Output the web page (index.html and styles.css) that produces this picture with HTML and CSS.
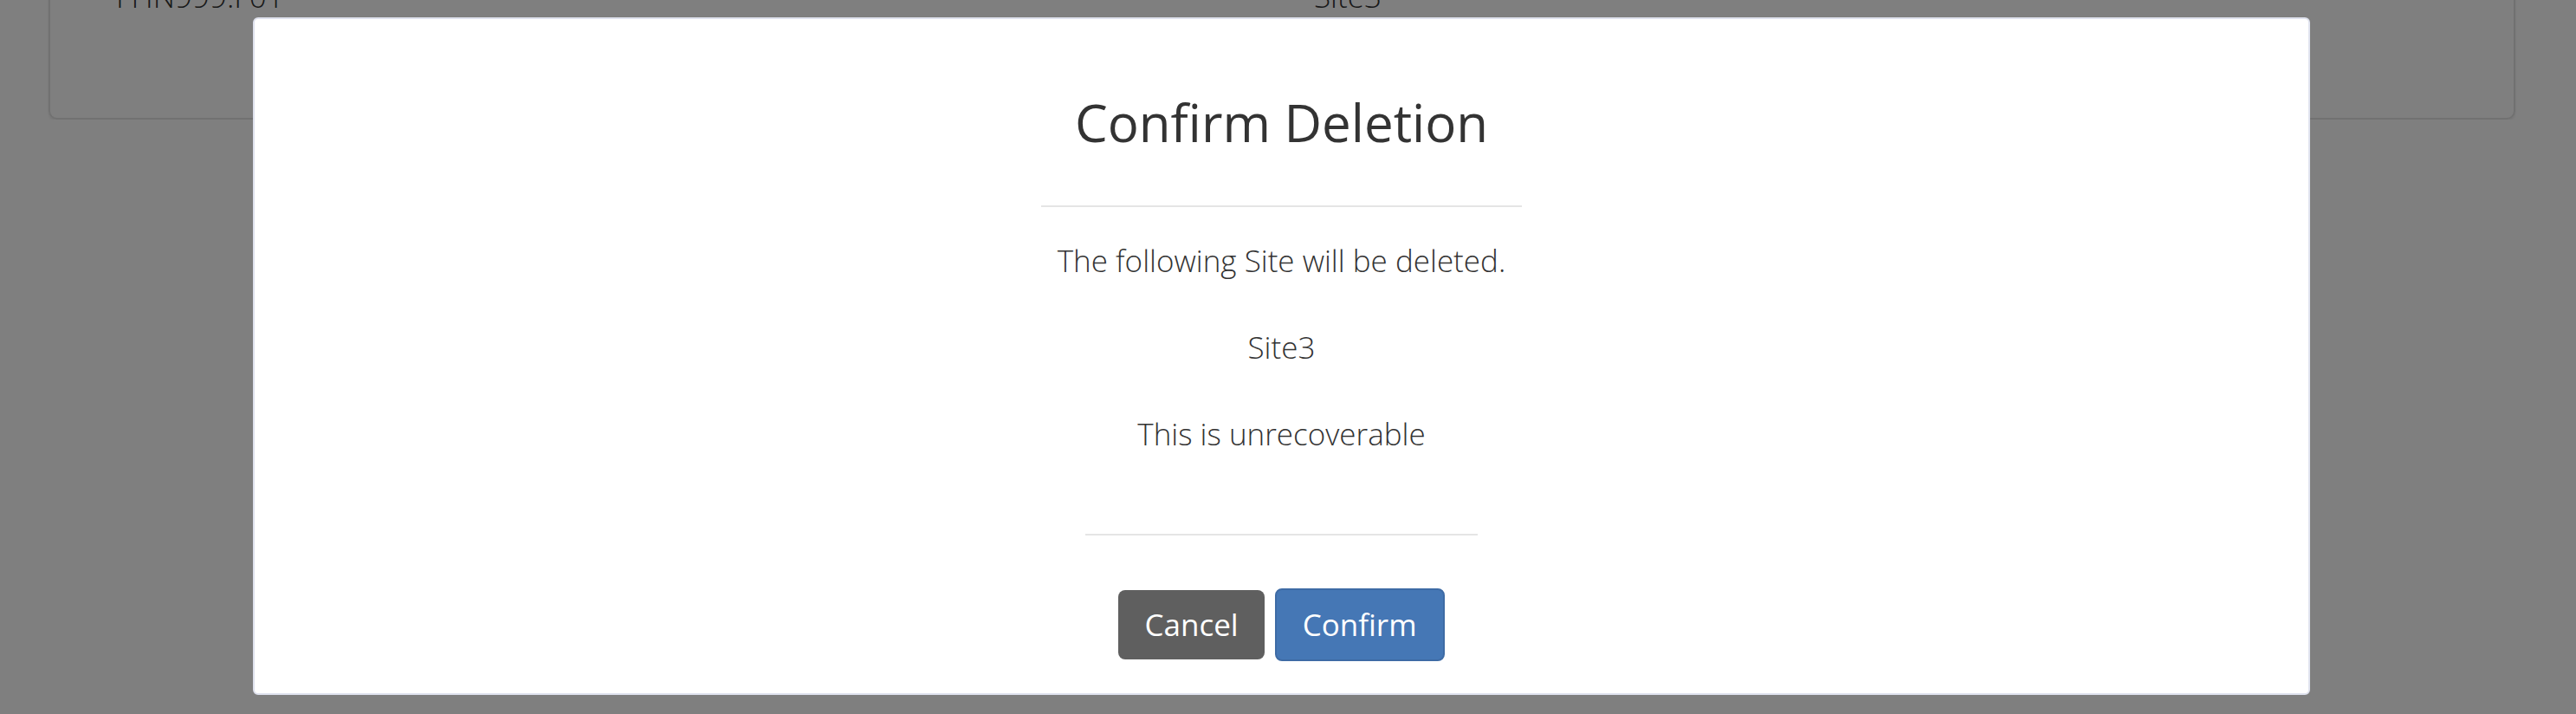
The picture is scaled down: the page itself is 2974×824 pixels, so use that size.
FILE: index.html
```html
<!DOCTYPE html>
<html lang="en">
<head>
<meta charset="utf-8">
<title>Confirm Deletion</title>
<link rel="stylesheet" href="styles.css">
</head>
<body>
<div class="page">
  <div class="card">
    <div class="row">
      <div class="cell cell-name">FHN999.F01</div>
      <div class="cell">Site3</div>
    </div>
  </div>
</div>

<div class="overlay">
  <div class="modal">
    <div class="modal-header">
      <h4 class="modal-title">Confirm Deletion</h4>
    </div>
    <div class="modal-body">
      <p>The following Site will be deleted.</p>
      <p>Site3</p>
      <p>This is unrecoverable</p>
    </div>
    <div class="modal-footer">
      <button class="btn btn-cancel" type="button">Cancel</button>
      <button class="btn btn-confirm" type="button">Confirm</button>
    </div>
  </div>
</div>
</body>
</html>
```

FILE: styles.css
```css
html, body {
  margin: 0;
  padding: 0;
  background: #ffffff;
  font-family: "Open Sans", "Liberation Sans", sans-serif;
  color: #333333;
}

.page {
  margin-top: -29px;
  padding: 0 70px 0 56px;
}

.card {
  border: 2px solid #e2e2e2;
  border-top: none;
  border-radius: 0 0 10px 10px;
  box-shadow: 0 2px 3px rgba(0, 0, 0, 0.08);
  padding: 0 0 115px 76px;
}

.row {
  display: grid;
  grid-template-columns: 1383px 1fr;
  font-size: 35px;
  font-weight: 300;
  line-height: 50px;
  color: #333333;
}

.overlay {
  position: fixed;
  inset: 0;
  background: rgba(0, 0, 0, 0.5);
  display: flex;
  justify-content: center;
  align-items: flex-start;
  padding: 20px 15px 0 0;
}

.modal {
  width: 2375px;
  box-sizing: border-box;
  background: #ffffff;
  border: 2px solid #dfe2ee;
  border-radius: 6px;
  display: flex;
  flex-direction: column;
  align-items: center;
  text-align: center;
}

.modal-header {
  padding: 85px 39px 61px;
  border-bottom: 2px solid #e5e5e5;
}

.modal-title {
  margin: 0;
  font-size: 60px;
  font-weight: 400;
  line-height: 69px;
  color: #333333;
}

.modal-body {
  align-self: stretch;
  padding: 37px 0 40px;
  font-size: 35px;
  font-weight: 300;
  line-height: 50px;
  color: #333333;
}

.modal-body p {
  margin: 0 0 50px;
}

.modal-footer {
  display: flex;
  align-items: center;
  gap: 12px;
  padding: 61px 38px 37px;
  border-top: 2px solid #e5e5e5;
}

.btn {
  font-family: "Open Sans", "Liberation Sans", sans-serif;
  font-size: 35px;
  font-weight: 400;
  line-height: 50px;
  padding: 15px 30px;
  color: #ffffff;
  border-radius: 8px;
  cursor: pointer;
}

.btn-cancel {
  background: #5f5f5f;
  border: none;
}

.btn-confirm {
  background: #4577b5;
  border: 2px solid #3e6ba5;
}
```
